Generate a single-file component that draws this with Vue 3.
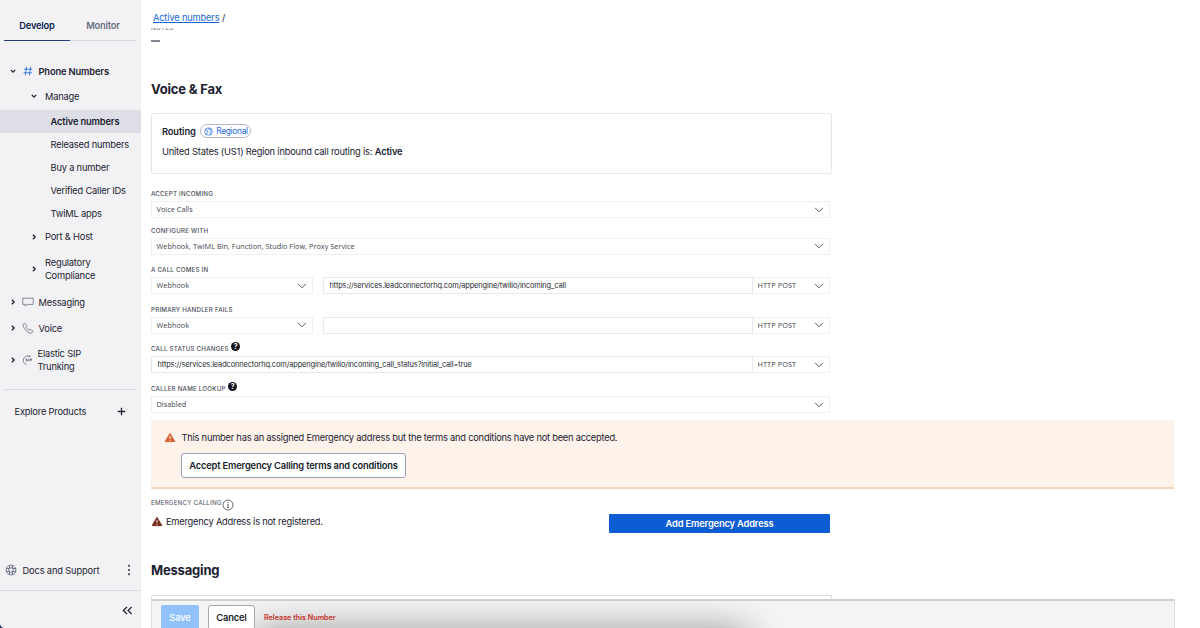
<script setup>
const subItems = ['Released numbers', 'Buy a number', 'Verified Caller IDs', 'TwiML apps']
</script>

<template>
  <div class="app">
    <aside class="sidebar">
      <div class="tabs">
        <div class="tab on">Develop</div>
        <div class="tab">Monitor</div>
      </div>
      <nav class="nav">
        <div class="item top bold">
          <svg class="chev" viewBox="0 0 8 8"><path d="M1.8 2.9 4 5.1 6.2 2.9" /></svg>
          <svg class="ico blue" viewBox="0 0 12 12"><path d="M4.5 1.7 3.2 10.3M8.7 1.7 7.4 10.3M2.2 4.2h8.2M1.6 7.8h8.2" /></svg>
          <span>Phone Numbers</span>
        </div>
        <div class="item second manage">
          <svg class="chev" viewBox="0 0 8 8"><path d="M1.8 2.9 4 5.1 6.2 2.9" /></svg>
          <span>Manage</span>
        </div>
        <div class="item third bold current">Active numbers</div>
        <div v-for="name in subItems" :key="name" class="item third">{{ name }}</div>
        <div class="item second port">
          <svg class="chev" viewBox="0 0 8 8"><path d="M2.9 1.8 5.1 4 2.9 6.2" /></svg>
          <span>Port &amp; Host</span>
        </div>
        <div class="item second regulatory">
          <svg class="chev" viewBox="0 0 8 8"><path d="M2.9 1.8 5.1 4 2.9 6.2" /></svg>
          <span>Regulatory<br />Compliance</span>
        </div>
        <div class="item top messaging">
          <svg class="chev" viewBox="0 0 8 8"><path d="M2.9 1.8 5.1 4 2.9 6.2" /></svg>
          <svg class="ico" viewBox="0 0 12 12"><path d="M.8 2.2h10.400v6.200H5.200L3.400 10.200V8.400H.8z" /></svg>
          <span>Messaging</span>
        </div>
        <div class="item top">
          <svg class="chev" viewBox="0 0 8 8"><path d="M2.9 1.8 5.1 4 2.9 6.2" /></svg>
          <svg class="ico" viewBox="0 0 12 12"><path d="M1.200 2.400 2.700 1 4.800 3.700 3.900 5c.7 1.400 1.800 2.500 3.100 3.200l1.300-1 2.700 2-1.300 1.700C7 12.300 0 5.600 1.200 2.400z" /></svg>
          <span>Voice</span>
        </div>
        <div class="item top elastic">
          <svg class="chev" viewBox="0 0 8 8"><path d="M2.9 1.8 5.1 4 2.9 6.2" /></svg>
          <svg class="ico" viewBox="0 0 12 12">
            <path d="M9 2.600A4.400 4.400 0 1 0 5.600 10.600M9 2.600V1M9 2.600H7.400M6.300 4.900H5v1h1.300v1.100H4.900M7.700 4.900v2.100M9 7.100V4.900h1.700v1.200H9" />
          </svg>
          <span>Elastic SIP<br />Trunking</span>
        </div>
      </nav>
      <div class="explore">
        <span>Explore Products</span>
        <svg width="9" height="9" viewBox="0 0 9 9"><path d="M4.500.8v7.400M.8 4.500h7.400" /></svg>
      </div>
      <div class="docs">
        <svg class="buoy" viewBox="0 0 12 12">
          <circle cx="6" cy="6" r="4.900" /><circle cx="6" cy="6" r="2.300" />
          <path d="M4.500 1.300v2.800M7.500 1.300v2.800M4.500 7.900v2.800M7.500 7.900v2.800M1.300 4.500h2.800M1.300 7.500h2.800M7.900 4.500h2.800M7.900 7.500h2.800" />
        </svg>
        <span>Docs and Support</span>
        <svg class="dots" viewBox="0 0 4 12"><circle cx="2" cy="1.700" r=".95" /><circle cx="2" cy="6" r=".95" /><circle cx="2" cy="10.300" r=".95" /></svg>
      </div>
      <div class="collapse">
        <svg width="11" height="9" viewBox="0 0 11 9"><path d="M5 .9 1.400 4.500 5 8.100M9.700.9 6.100 4.500l3.600 3.600" /></svg>
      </div>
      <i class="corner"></i>
    </aside>

    <main class="main">
      <header class="crumbs"><a>Active numbers</a> /</header>
      <div class="scrolled">
        <div class="notes">NOTES</div>
        <div class="dash"></div>
        <h2 class="voice-title">Voice &amp; Fax</h2>
        <section class="card">
          <div class="routing">
            <b>Routing</b>
            <span class="pill">
              <svg viewBox="0 0 10 10"><circle cx="5" cy="5" r="4.200" /><path d="M1.300 3.300 3.300 3l1 1.300-1.200 1.200.5 1.700-.8 1.200M5.500 1l-.4 1.500 1.500.8 1.800-1M9 5.500l-2-.6-1 1.200 1.100 1.200-.3 1.300" /></svg>
              Regional
            </span>
          </div>
          <p>United States (US1) Region inbound call routing is: <b>Active</b></p>
        </section>

        <div class="field f1">
          <label>ACCEPT INCOMING</label>
          <div class="select"><span>Voice Calls</span><svg class="down" viewBox="0 0 10 6"><path d="m1 .8 4 4 4-4" /></svg></div>
        </div>
        <div class="field f2">
          <label>CONFIGURE WITH</label>
          <div class="select"><span>Webhook, TwiML Bin, Function, Studio Flow, Proxy Service</span><svg class="down" viewBox="0 0 10 6"><path d="m1 .8 4 4 4-4" /></svg></div>
        </div>
        <div class="field f3">
          <label>A CALL COMES IN</label>
          <div class="row">
            <div class="select kind"><span>Webhook</span><svg class="down" viewBox="0 0 10 6"><path d="m1 .8 4 4 4-4" /></svg></div>
            <div class="input">https://services.leadconnectorhq.com/appengine/twilio/incoming_call</div>
            <div class="select method"><span>HTTP POST</span><svg class="down" viewBox="0 0 10 6"><path d="m1 .8 4 4 4-4" /></svg></div>
          </div>
        </div>
        <div class="field f4">
          <label>PRIMARY HANDLER FAILS</label>
          <div class="row">
            <div class="select kind"><span>Webhook</span><svg class="down" viewBox="0 0 10 6"><path d="m1 .8 4 4 4-4" /></svg></div>
            <div class="input"></div>
            <div class="select method"><span>HTTP POST</span><svg class="down" viewBox="0 0 10 6"><path d="m1 .8 4 4 4-4" /></svg></div>
          </div>
        </div>
        <div class="field f5">
          <label>CALL STATUS CHANGES <i class="help">?</i></label>
          <div class="row">
            <div class="input">https://services.leadconnectorhq.com/appengine/twilio/incoming_call_status?initial_call=true</div>
            <div class="select method"><span>HTTP POST</span><svg class="down" viewBox="0 0 10 6"><path d="m1 .8 4 4 4-4" /></svg></div>
          </div>
        </div>
        <div class="field f6">
          <label>CALLER NAME LOOKUP <i class="help">?</i></label>
          <div class="select"><span>Disabled</span><svg class="down" viewBox="0 0 10 6"><path d="m1 .8 4 4 4-4" /></svg></div>
        </div>

        <section class="banner">
          <div class="msg">
            <svg class="warn" viewBox="0 0 12 11"><path class="tri" d="M6 1.400 10.800 9.600H1.200z" /><path class="mark" d="M6 4v3M6 7.900v1" /></svg>
            <span>This number has an assigned Emergency address but the terms and conditions have not been accepted.</span>
          </div>
          <button class="accept">Accept Emergency Calling terms and conditions</button>
        </section>

        <section class="emergency">
          <div>
            <label class="em-label">EMERGENCY CALLING
              <svg class="info" viewBox="0 0 12 12"><circle cx="6" cy="6" r="5" /><path d="M6 5.200v3.300M6 3.200v1M5 8.600h2M5.100 5.300H6" /></svg>
            </label>
            <div class="em-text">
              <svg class="warn dark" viewBox="0 0 12 11"><path class="tri" d="M6 1.400 10.800 9.600H1.200z" /><path class="mark" d="M6 4v3M6 7.900v1" /></svg>
              <span>Emergency Address is not registered.</span>
            </div>
          </div>
          <button class="add">Add Emergency Address</button>
        </section>

        <h2 class="msg-title">Messaging</h2>
        <div class="next-card"></div>
      </div>
      <footer class="actions">
        <button class="save">Save</button>
        <button class="cancel">Cancel</button>
        <a class="release">Release this Number</a>
      </footer>
    </main>
  </div>
</template>

<style>
html, body { margin: 0; overflow: hidden; background: #fff; }
</style>

<style scoped>
* { box-sizing: border-box; }
.app { width: 1200px; height: 628px; display: flex; overflow: hidden; background: #fff; color: #1b2130; font: 400 9.3px/13px Inter, "Liberation Sans", sans-serif; letter-spacing: -.19px; white-space: nowrap; }
svg { display: block; flex: none; fill: none; stroke: currentColor; }
.sidebar { position: relative; width: 141px; flex: none; height: 628px; background: #f2f2f4; display: flex; flex-direction: column; }
.tabs { display: flex; margin: 11px 5px 0 4px; height: 30px; flex: none; }
.tab { width: 66px; height: 30px; line-height: 29px; text-align: center; font-weight: 600; color: #6a6e82; border-bottom: 1px solid #d9dae0; }
.tab.on { color: #0a1d55; border-bottom: 1px solid #233d74; }
.nav { padding-top: 17px; }
.item { display: flex; align-items: center; height: 23px; }
.bold { font-weight: 600; letter-spacing: -.13px; }
.top { padding-left: 9px; height: 26px; }
.top .ico { margin: 0 5px 0 4.500px; }
.chev { width: 8px; height: 8px; stroke-width: 1.300; color: #1b2130; }
.ico { width: 12px; height: 12px; stroke-width: .75; color: #5f6577; }
.ico.blue { color: #2a72d8; stroke-width: .9; }
.second { padding-left: 30px; }
.second .chev { margin-right: 7px; }
.manage { height: 24px; }
.third { padding-left: 50.500px; }
.current { background: #dedfe6; height: 23px; margin-top: 1.500px; }
.port { height: 24px; }
.regulatory { height: 40px; }
.messaging { margin-top: .5px; }
.elastic { height: 38px; }
.elastic .ico { margin-left: 3.500px; }
.explore { display: flex; justify-content: space-between; align-items: center; height: 43px; margin: 10px 5px 0 4px; padding: 0 10.500px; border-top: 1px solid #dbdce1; }
.explore svg { stroke-width: 1.300; }
.docs { display: flex; align-items: center; height: 40px; margin-top: auto; padding-left: 5px; border-bottom: 1px solid #dbdce1; }
.docs span { margin-left: 5.500px; letter-spacing: -.15px; }
.buoy { width: 12px; height: 12px; stroke-width: .8; color: #555b75; }
.dots { width: 4px; height: 12px; fill: #1b2130; stroke: none; margin-left: auto; margin-right: 10px; }
.collapse { height: 37.500px; display: flex; justify-content: flex-end; padding: 15.500px 8px 0 0; }
.collapse svg { stroke-width: 1.300; }
.corner { position: absolute; left: 0; bottom: 0; width: 4px; height: 4px; background: radial-gradient(circle at 100% 0, transparent 3.500px, #15335c 4px); }

.main { width: 1034px; flex: none; padding-left: 10px; height: 628px; display: flex; flex-direction: column; }
.crumbs { height: 28px; flex: none; padding: 11px 0 0 2px; line-height: 13px; font-size: 9.200px; letter-spacing: -.11px; }
.crumbs a { color: #1766d6; text-decoration: underline; }
.scrolled { height: 571px; flex: none; overflow: hidden; display: flex; flex-direction: column; }
.scrolled > * { flex: none; }
.notes { height: 7px; line-height: 7px; font-size: 6.300px; letter-spacing: .25px; color: #666; margin-top: -3.500px; }
.dash { width: 9px; height: 1.500px; background: #85878e; margin-top: 8.500px; }
h2 { margin: 0; font-size: 13px; line-height: 18px; font-weight: 700; letter-spacing: -.18px; }
.voice-title { margin-top: 38.500px; }
.card { width: 681px; height: 61px; margin-top: 15px; border: 1px solid #e8e8ea; border-radius: 2px; padding: 10px 10px 0; }
.routing { display: flex; align-items: center; height: 14px; gap: 4.500px; }
b { font-weight: 600; letter-spacing: -.12px; }
.pill { display: flex; align-items: center; height: 14px; width: 51px; padding-left: 3px; border: 1px solid #b2b8c6; border-radius: 8px; color: #1f68d5; font-size: 8.400px; letter-spacing: -.3px; gap: 3px; }
.pill svg { width: 9px; height: 9px; stroke-width: .75; }
.card p { margin: 7px 0 0; line-height: 14px; }
.field { width: 679px; }
label { display: flex; align-items: center; height: 13px; font-size: 6.200px; letter-spacing: .21px; color: #4a4e57; margin-bottom: 1px; font-weight: 500; }
.f1 { margin-top: 12px; }
.f1 label { height: 14px; }
.f2 { margin-top: 5.500px; }
.f3, .f4, .f5 { margin-top: 8.500px; }
.f6 { margin-top: 9px; }
.row { display: flex; }
.select { display: flex; align-items: center; justify-content: space-between; height: 17px; padding: 0 5px 0 4.500px; border: 1px solid #f0f0f1; font: 400 7.300px/15px "Open Sans", "Noto Sans", sans-serif; letter-spacing: .03px; color: #42454c; }
.down { width: 10px; height: 6px; stroke-width: .9; color: #44474e; }
.kind { width: 162px; margin-right: 10px; }
.method { width: 77px; border-left: 0; letter-spacing: .1px; }
.input { flex: 1; height: 17px; border: 1px solid #e8e8ea; padding-left: 5.500px; font-size: 7.400px; line-height: 15px; letter-spacing: -.11px; color: #26292f; }
.help { width: 9px; height: 9px; margin: -4px 0 0 2.500px; border-radius: 50%; background: #15161b; color: #fff; font: 700 7px/9px Inter, sans-serif; letter-spacing: 0; text-align: center; }
.banner { width: 1023px; height: 69px; margin-top: 7px; background: #fef3ea; border-bottom: 2px solid #f8d6bc; padding: 10px 0 0 13px; }
.msg { display: flex; align-items: center; height: 15px; gap: 5.500px; letter-spacing: -.23px; }
.warn { width: 12px; height: 11px; color: #d96232; }
.warn.dark { color: #7a2a20; }
.tri { fill: currentColor; stroke-width: 1; stroke-linejoin: round; }
.mark { stroke: #fff; stroke-width: .9; }
button { font-family: inherit; letter-spacing: -.15px; white-space: nowrap; padding: 0; display: block; color: #171c29; font-weight: 600; font-size: 9.300px; background: #fff; border: 1px solid #9aa2b8; border-radius: 3px; }
.accept { margin: 8px 0 0 17px; width: 225px; height: 25px; }
.emergency { display: flex; justify-content: space-between; width: 679px; height: 48px; padding-top: 8px; }
.em-label { margin: -.5px 0 0; font-weight: 400; font-size: 6.200px; height: 12px; }
.info { width: 12px; height: 12px; stroke-width: .85; margin: 4px 0 0 0; }
.em-text { display: flex; align-items: center; gap: 3px; margin-top: 6px; height: 13px; letter-spacing: -.22px; }
button.add { width: 221px; height: 19px; margin-top: 17px; background: #0d5cd3; color: #fff; border: 0; border-radius: 1px; }
.msg-title { margin-top: 23.500px; }
.next-card { width: 681px; height: 20px; margin-top: 16px; border: 1px solid #e0e0e2; }
.actions { position: relative; overflow: hidden; width: 1024px; height: 29px; flex: none; display: flex; align-items: flex-start; padding: 4px 0 0 9px; border: 1px solid #dedede; border-bottom: 0; border-top: 2px solid #cfcfcf; background: #f4f4f4; }
.actions::before { content: ""; position: absolute; left: 105px; top: 31px; width: 490px; height: 60px; border-radius: 10px; box-shadow: 0 0 36px 2px rgba(0, 0, 0, .4); }
.actions > * { position: relative; }
.actions button { height: 25px; }
button.save { width: 38px; background: #92c2fb; color: #f3f9ff; border: 0; border-radius: 2px; }
button.cancel { width: 47px; margin-left: 9px; border-color: #a5a7ac; }
.release { margin: 6px 0 0 9px; color: #c4322a; font-weight: 600; font-size: 7.200px; letter-spacing: 0; line-height: 13px; }
</style>
